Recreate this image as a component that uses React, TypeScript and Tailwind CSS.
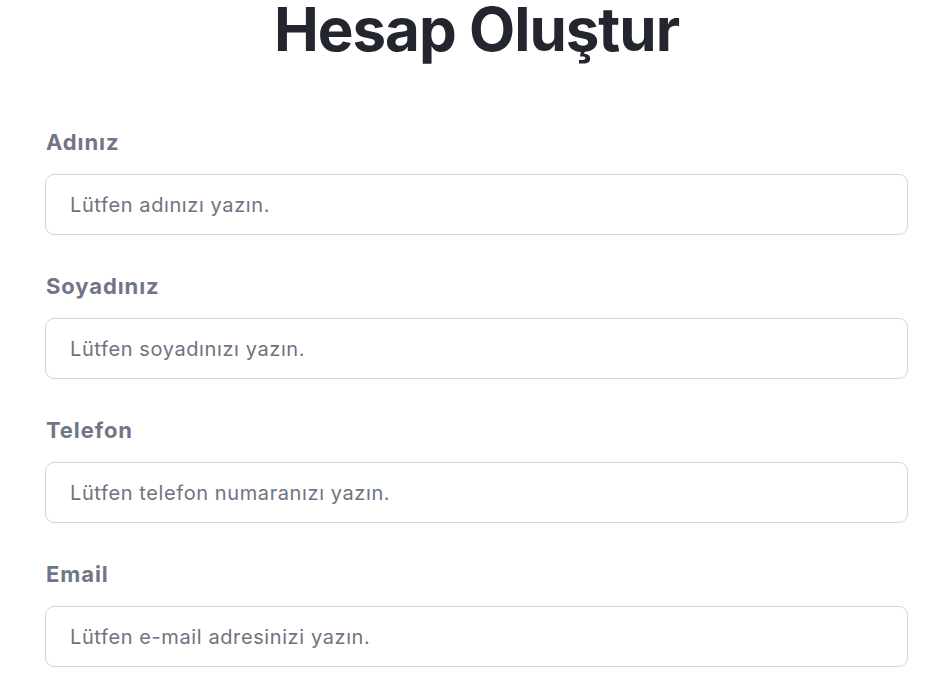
const fields = [
  { label: "Adınız", placeholder: "Lütfen adınızı yazın.", type: "text" },
  { label: "Soyadınız", placeholder: "Lütfen soyadınızı yazın.", type: "text" },
  { label: "Telefon", placeholder: "Lütfen telefon numaranızı yazın.", type: "tel" },
  { label: "Email", placeholder: "Lütfen e-mail adresinizi yazın.", type: "email" },
];

export default function App() {
  return (
    <div className="min-h-screen bg-white font-['Inter','Liberation_Sans',sans-serif]">
      <div className="pl-[45px] pr-[44px] pb-10">
        <h1 className="text-center text-[60px] font-bold leading-[58px] tracking-[-1px] text-[#23262f]">
          Hesap Oluştur
        </h1>

        <form className="mt-[70px] flex flex-col gap-[37px]">
          {fields.map((f) => (
            <div key={f.label} className="flex flex-col">
              <label className="mb-[18px] pl-[1px] text-[22px] font-bold leading-[28px] tracking-[0.9px] text-[#717684]">
                {f.label}
              </label>
              <input
                type={f.type}
                placeholder={f.placeholder}
                className="h-[61px] w-full rounded-[9px] border border-[#d3d5dc] bg-white px-[24px] text-[20px] tracking-[0.6px] text-[#23262f] outline-none placeholder:text-[#6f737f]"
              />
            </div>
          ))}
        </form>
      </div>
    </div>
  );
}
